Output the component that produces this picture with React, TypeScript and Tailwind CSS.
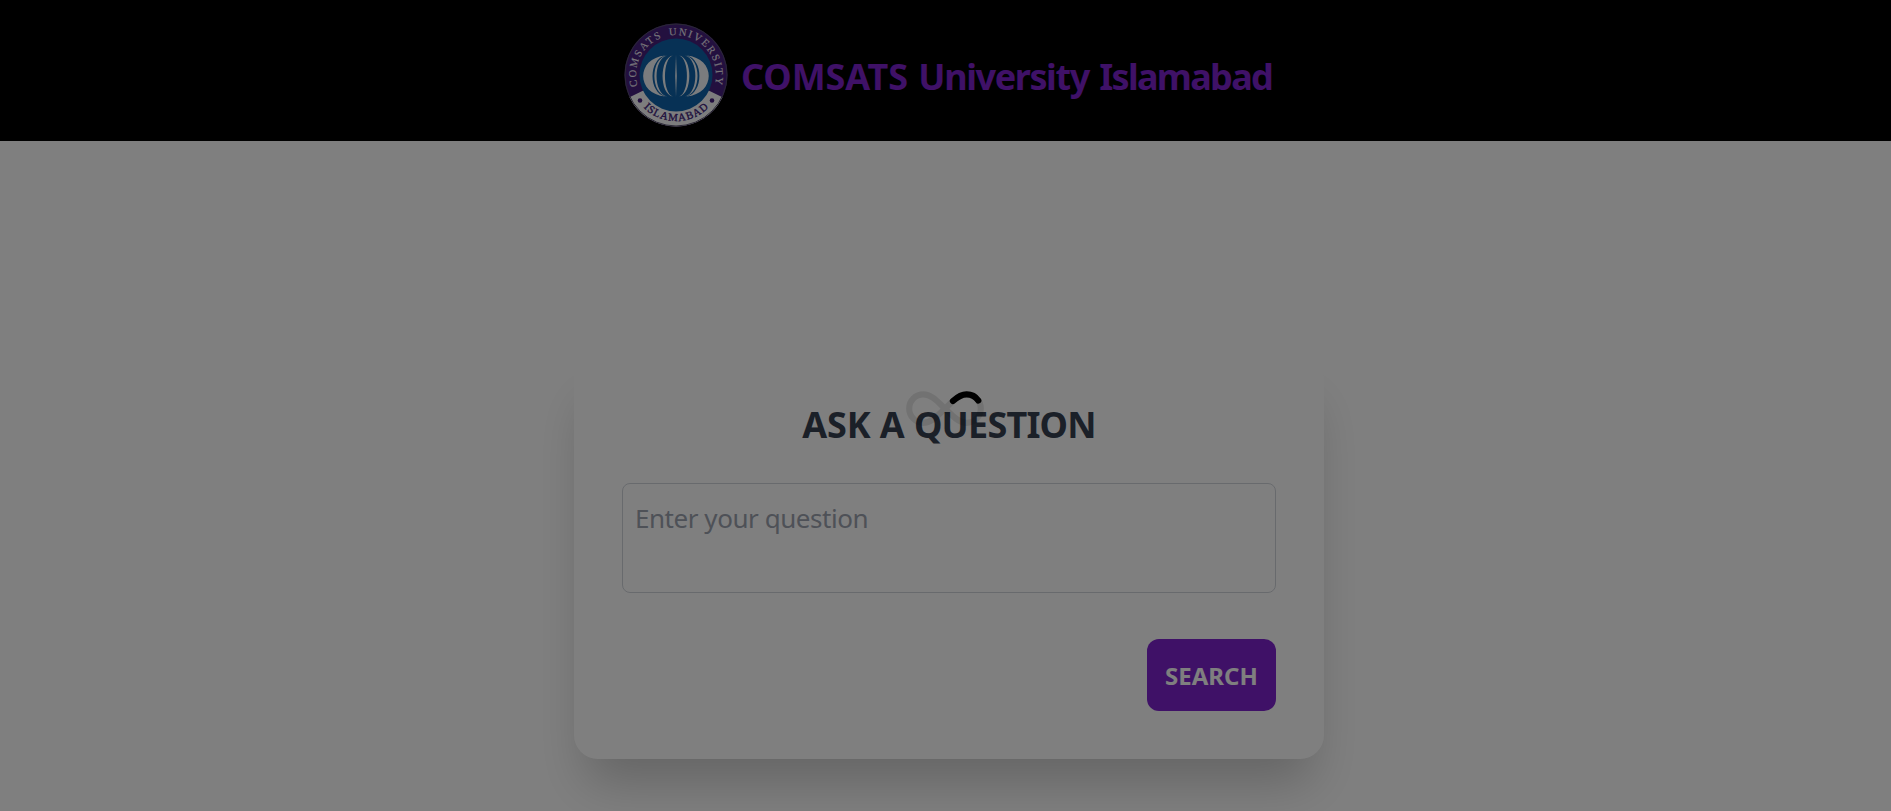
import React from "react";

const bands = [
  { end: 10.5, outer: 32.8, inner: 23.5 },
  { end: 9, outer: 21.6, inner: 19.4 },
  { end: 3.2, outer: 13.4, inner: 11 },
];

const bulge = (end: number, reach: number) => end + (reach - end) * 1.333;

const bandPath = (end: number, outer: number, inner: number, side: number) => {
  const e = end * side;
  const o = bulge(end, outer) * side;
  const i = bulge(end, inner) * side;
  return `M${e} -19.5 C${o} -17 ${o} 19 ${e} 21.5 C${i} 18 ${i} -16 ${e} -19.5 Z`;
};

function Crest() {
  return (
    <svg viewBox="-52 -52 104 104" className="h-26 w-26 shrink-0" aria-hidden="true">
      <defs>
        <path id="crest-top" d="M-38.4 11.2 A 40 40 0 1 1 38.4 11.2" />
        <path id="crest-bottom" d="M-41 20.9 A 46 46 0 0 0 41 20.9" />
      </defs>
      <circle r="51.5" fill="#46207f" />
      <path d="M-46.5 22.2 A51.5 51.5 0 0 0 46.5 22.2 L30 14.3 L-30 14.3 Z" fill="#fbfbfd" />
      <circle r="51" fill="none" stroke="#55506b" strokeWidth="1" />
      <circle r="36.5" fill="#0e62aa" />
      {bands.map((b) => (
        <g key={b.outer} fill="#f4f8fc">
          <path d={bandPath(b.end, b.outer, b.inner, -1)} />
          <path d={bandPath(b.end, b.outer, b.inner, 1)} />
        </g>
      ))}
      <path d="M0 -20 Q1.6 1 0 22 Q-1.6 1 0 -20Z" fill="#f4f8fc" />
      <circle cx="-36" cy="25.5" r="2.3" fill="#46207f" />
      <circle cx="36" cy="25.5" r="2.3" fill="#46207f" />
      <g className="font-['Liberation_Serif',serif]">
        <text fill="#f1eef6" stroke="#f1eef6" strokeWidth="0.1" fontSize="10.5" wordSpacing="2">
          <textPath href="#crest-top" textLength="146" lengthAdjust="spacing">
            COMSATS UNIVERSITY
          </textPath>
        </text>
        <text fill="#3b1a78" stroke="#3b1a78" strokeWidth="0.35" fontSize="10.8" textAnchor="middle">
          <textPath href="#crest-bottom" startOffset="50%" textLength="72" lengthAdjust="spacing">
            ISLAMABAD
          </textPath>
        </text>
      </g>
    </svg>
  );
}

const LOOP =
  "M39 17.6 C46.5 10.5 52.5 3.4 60.6 3.4 C68.5 3.4 74.8 9.7 74.8 17.6 C74.8 25.5 68.5 31.8 60.6 31.8 C52.5 31.8 46.5 24.7 39 17.6 C31.5 10.5 25.5 3.4 17.4 3.4 C9.5 3.4 3.2 9.7 3.2 17.6 C3.2 25.5 9.5 31.8 17.4 31.8 C25.5 31.8 31.5 24.7 39 17.6 Z";

function InfinityLoader() {
  return (
    <svg viewBox="0 0 78 35" className="h-[35px] w-[78px]" fill="none" stroke="black" strokeWidth="6.2">
      <path d={LOOP} strokeOpacity="0.1" />
      <path d={LOOP} pathLength={100} strokeDasharray="15 85" strokeDashoffset="-5.6" strokeLinecap="round" />
    </svg>
  );
}

export default function App() {
  return (
    <div className="h-[811px] overflow-hidden bg-white font-['Noto_Sans','Open_Sans',sans-serif]">
      <header className="flex h-[141px] items-center bg-black pt-[9px] pl-[624px]">
        <Crest />
        <h1 className="mt-[3px] ml-[13px] text-4xl font-bold [word-spacing:1px] whitespace-nowrap text-[#7e22ce]">
          <span className="tracking-[-0.1px]">COMSATS</span> <span className="tracking-[-1.4px]">University</span>{" "}
          <span className="tracking-[-1.7px]">Islamabad</span>
        </h1>
      </header>
      <main className="pt-[216px] pl-[574px]">
        <section className="h-[402px] w-[750px] rounded-3xl bg-white p-12 shadow-[0_35px_50px_-12px_rgb(0_0_0/0.21)]">
          <h2 className="text-center text-4xl font-bold tracking-[-0.1px] text-[#374151]">
            ASK A <span className="tracking-[-0.8px]">QUESTION</span>
          </h2>
          <textarea
            placeholder="Enter your question"
            className="mt-[38px] block h-[110px] w-full resize-none rounded-lg border border-[#d1d5db] px-3 py-[15px] text-[26px] tracking-[-0.45px] placeholder:text-[#9ca3af]"
          />
          <div className="mt-[46px] flex justify-end">
            <button className="h-[72px] w-[129px] rounded-xl bg-[#7e22ce] pt-0.5 text-2xl font-bold text-white">
              SEARCH
            </button>
          </div>
        </section>
      </main>
      <div className="fixed inset-0 flex items-center justify-center bg-black/50 pt-[5px] pr-[2px]">
        <InfinityLoader />
      </div>
    </div>
  );
}
